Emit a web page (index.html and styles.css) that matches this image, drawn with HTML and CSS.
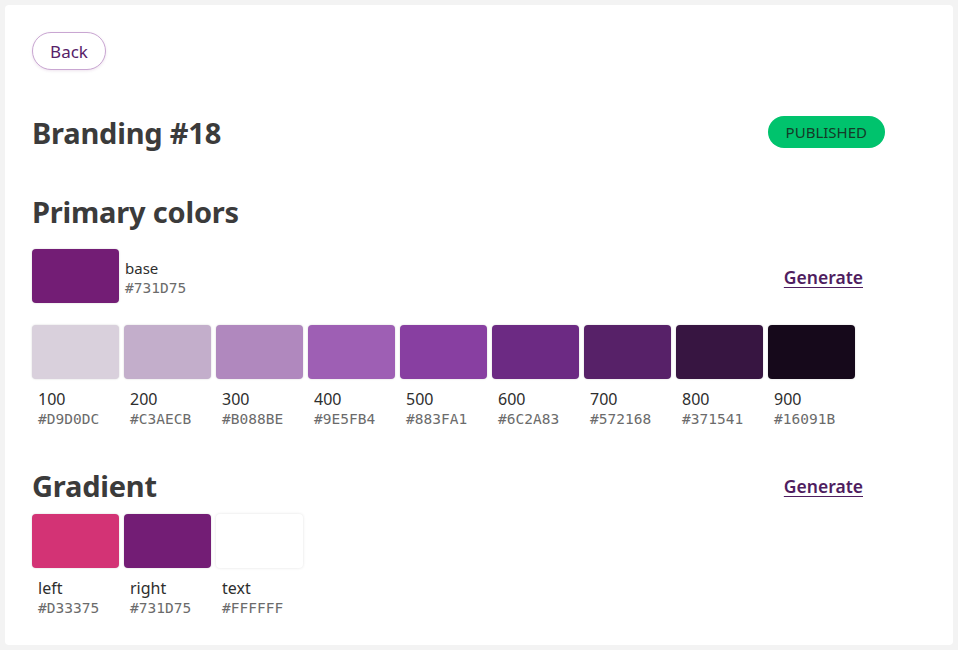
FILE: index.html
```html
<!DOCTYPE html>
<html lang="en">
<head>
<meta charset="utf-8">
<title>Branding #18</title>
<link rel="stylesheet" href="styles.css">
</head>
<body>
<main class="card">
  <button class="back">Back</button>

  <header class="title-row">
    <h1 class="title">Branding #18</h1>
    <span class="badge">PUBLISHED</span>
  </header>

  <section class="primary">
    <h2 class="section-title">Primary colors</h2>
    <div class="base-row">
      <div class="swatch" style="background:#731D75"></div>
      <div class="base-info">
        <div class="label">base</div>
        <div class="hex">#731D75</div>
      </div>
      <a class="generate" href="#">Generate</a>
    </div>

    <div class="shades">
      <div class="shade"><div class="swatch" style="background:#D9D0DC"></div><div class="meta"><div class="label">100</div><div class="hex">#D9D0DC</div></div></div>
      <div class="shade"><div class="swatch" style="background:#C3AECB"></div><div class="meta"><div class="label">200</div><div class="hex">#C3AECB</div></div></div>
      <div class="shade"><div class="swatch" style="background:#B088BE"></div><div class="meta"><div class="label">300</div><div class="hex">#B088BE</div></div></div>
      <div class="shade"><div class="swatch" style="background:#9E5FB4"></div><div class="meta"><div class="label">400</div><div class="hex">#9E5FB4</div></div></div>
      <div class="shade"><div class="swatch" style="background:#883FA1"></div><div class="meta"><div class="label">500</div><div class="hex">#883FA1</div></div></div>
      <div class="shade"><div class="swatch" style="background:#6C2A83"></div><div class="meta"><div class="label">600</div><div class="hex">#6C2A83</div></div></div>
      <div class="shade"><div class="swatch" style="background:#572168"></div><div class="meta"><div class="label">700</div><div class="hex">#572168</div></div></div>
      <div class="shade"><div class="swatch" style="background:#371541"></div><div class="meta"><div class="label">800</div><div class="hex">#371541</div></div></div>
      <div class="shade"><div class="swatch" style="background:#16091B"></div><div class="meta"><div class="label">900</div><div class="hex">#16091B</div></div></div>
    </div>
  </section>

  <section class="gradient">
    <div class="gradient-head">
      <h2 class="section-title">Gradient</h2>
      <a class="generate" href="#">Generate</a>
    </div>
    <div class="shades">
      <div class="shade"><div class="swatch" style="background:#D33375"></div><div class="meta"><div class="label">left</div><div class="hex">#D33375</div></div></div>
      <div class="shade"><div class="swatch" style="background:#731D75"></div><div class="meta"><div class="label">right</div><div class="hex">#731D75</div></div></div>
      <div class="shade"><div class="swatch swatch-white" style="background:#FFFFFF"></div><div class="meta"><div class="label">text</div><div class="hex">#FFFFFF</div></div></div>
    </div>
  </section>
</main>
</body>
</html>
```

FILE: styles.css
```css
* { box-sizing: border-box; }

html, body {
  margin: 0;
  padding: 0;
}

body {
  background: #f3f3f3;
  padding: 5px;
  font-family: "Noto Sans", "Open Sans", sans-serif;
  color: #333;
}

.card {
  background: #fff;
  border-radius: 4px;
  height: 640px;
  width: 948px;
  padding: 27px;
}

.back {
  display: block;
  width: 74px;
  height: 38px;
  border: 1px solid #c9a6d2;
  border-radius: 19px;
  background: #fff;
  color: #572168;
  font-family: inherit;
  font-size: 17px;
  padding: 0;
  box-shadow: 0 1px 3px rgba(115, 29, 117, 0.12);
}

.title-row {
  display: flex;
  align-items: center;
  justify-content: space-between;
  margin-top: 46px;
  padding-right: 41px;
}

.title,
.section-title {
  margin: 0;
  font-size: 29px;
  line-height: 34px;
  font-weight: 700;
  color: #3b3b3b;
  letter-spacing: -0.2px;
}

.badge {
  display: inline-block;
  background: #00c36d;
  color: #143b28;
  font-size: 15px;
  line-height: 32px;
  height: 32px;
  padding: 0 18px;
  border-radius: 16px;
  margin-top: -2px;
}

.primary {
  margin-top: 45px;
}

.base-row {
  display: flex;
  align-items: center;
  margin-top: 20px;
  padding-right: 63px;
}

.base-info {
  margin-left: 6px;
  align-self: flex-start;
  margin-top: 9px;
}

.base-row .generate {
  margin-left: auto;
  margin-top: 2px;
}

.swatch {
  width: 87px;
  height: 54px;
  border-radius: 4px;
  box-shadow: 0 0 2px rgba(0, 0, 0, 0.18);
}

.swatch-white {
  box-shadow: 0 0 3px rgba(0, 0, 0, 0.12);
}

.label {
  font-size: 15px;
  line-height: 20px;
  color: #2e2e2e;
}

.hex {
  font-family: "DejaVu Sans Mono", "Liberation Mono", monospace;
  font-size: 14.5px;
  line-height: 20px;
  color: #6b6b6b;
}

.generate {
  color: #4f1d5f;
  font-size: 17.5px;
  font-weight: 600;
  text-decoration: underline;
  text-underline-offset: 3px;
  text-decoration-thickness: 1px;
}

.shades {
  display: flex;
  gap: 5px;
  margin-top: 22px;
}

.shade .meta {
  padding-left: 6px;
  margin-top: 10px;
}

.shade .label {
  font-size: 16px;
}

.gradient {
  margin-top: 40px;
}

.gradient-head {
  display: flex;
  align-items: center;
  justify-content: space-between;
  padding-right: 63px;
}

.gradient .shades {
  margin-top: 11px;
}

.gradient .shade .meta {
  margin-top: 10px;
}
```
